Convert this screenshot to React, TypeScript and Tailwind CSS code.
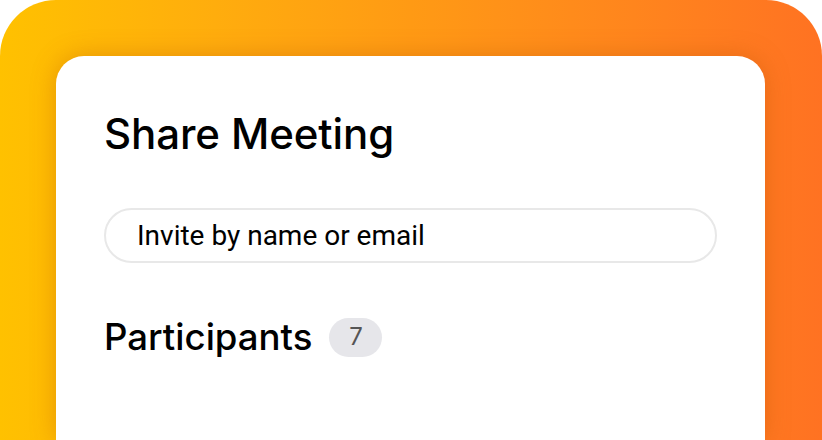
export default function App() {
  return (
    <main className="h-[440px] w-[822px] overflow-hidden bg-white">
      <div className="h-full rounded-t-[56px] bg-gradient-to-r from-[#ffc100] via-[#ff9a14] to-[#ff7222] pl-[56px] pr-[57px] pt-[56px]">
        <section
          className="h-full rounded-t-[28px] bg-white pl-[48px] pr-[48px] pt-[52px] text-black shadow-[0_0_24px_rgba(180,80,0,0.35)]"
          style={{ fontFamily: "Inter, 'Liberation Sans', sans-serif" }}
        >
          <h1 className="text-[42px] font-medium leading-[52px] tracking-[-0.1px]">Share Meeting</h1>

          <div
            className="mt-[48px] flex h-[55px] items-center rounded-full border-2 border-[#e8e8e8] pl-[31px] text-[28px]"
            style={{ fontFamily: "Roboto, 'Liberation Sans', sans-serif" }}
          >
            Invite by name or email
          </div>

          <div className="mt-[52px] flex items-center gap-[17px]">
            <h2 className="text-[36.6px] font-medium leading-[44px]">Participants</h2>
            <span className="flex h-[39px] w-[53px] items-center justify-center rounded-full bg-[#e6e6ea] text-[24px] text-[#555]">
              7
            </span>
          </div>
        </section>
      </div>
    </main>
  )
}
